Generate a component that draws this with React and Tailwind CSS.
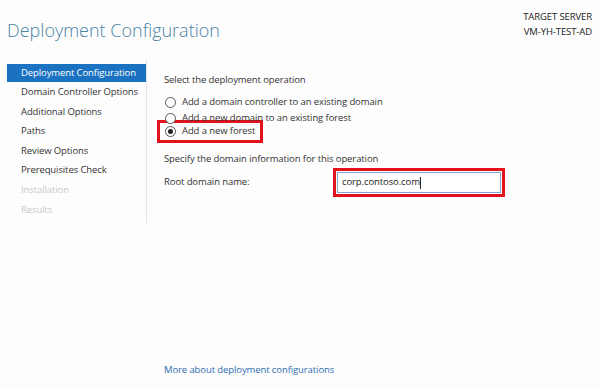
export default function App() {
  const items = [
    { t: "Deployment Configuration", s: "active" },
    { t: "Domain Controller Options" },
    { t: "Additional Options" },
    { t: "Paths" },
    { t: "Review Options" },
    { t: "Prerequisites Check" },
    { t: "Installation", s: "dis" },
    { t: "Results", s: "dis" },
  ];
  const Radio = ({ on }) => (
    <span className="w-[11px] h-[11px] rounded-full border border-[#555] bg-white flex items-center justify-center shrink-0">
      {on && <span className="w-[5px] h-[5px] rounded-full bg-[#222]" />}
    </span>
  );
  return (
    <div
      className="w-[602px] h-[387px] bg-[#fdfdfd] text-[#333] overflow-hidden relative tracking-[-0.1px]"
      style={{ fontFamily: '"Open Sans", "Noto Sans", sans-serif' }}
    >
      <div className="flex justify-between items-start h-[60px]">
        <div className="pl-[7px] pt-[17px] text-[18px] font-light text-[#4a84a6] leading-[26px] tracking-normal">
          Deployment Configuration
        </div>
        <div className="pr-[10px] pt-[9px] text-right text-[9.5px] leading-[15px] text-[#222]">
          <div>TARGET SERVER</div>
          <div>VM-YH-TEST-AD</div>
        </div>
      </div>
      <div className="flex">
        <div className="w-[147px] pl-[7px] pt-[4px] border-r border-[#e4e4e4] h-[163px]">
          {items.map((it) => (
            <div
              key={it.t}
              className={
                "pl-[14px] text-[9.5px] whitespace-nowrap " +
                (it.s === "active"
                  ? "bg-[#1b72c0] text-white h-[18px] leading-[18px]"
                  : it.s === "dis"
                  ? "text-[#c8c8c8] h-[19.6px] leading-[19.6px]"
                  : "text-[#333] h-[19.6px] leading-[19.6px]")
              }
            >
              {it.t}
            </div>
          ))}
        </div>
        <div className="flex-1 pl-[10px] text-[9.5px] text-[#333]">
          <div className="pl-[7px] pt-[13px] leading-[14px]">Select the deployment operation</div>
          <div className="mt-[8px] pl-[8px] flex items-center gap-[6px] h-[15px]">
            <Radio />
            <span>Add a domain controller to an existing domain</span>
          </div>
          <div className="pl-[8px] flex items-center gap-[6px] h-[16px]">
            <Radio />
            <span>Add a new domain to an existing forest</span>
          </div>
          <div className="-mt-[6px] flex items-center gap-[6px] h-[23px] w-[106px] border-[3px] border-[#e3131d] pl-[5px] whitespace-nowrap">
            <Radio on />
            <span>Add a new forest</span>
          </div>
          <div className="pl-[7px] mt-[9px] leading-[14px]">Specify the domain information for this operation</div>
          <div className="flex items-center mt-[2px]">
            <div className="pl-[7px] w-[176px]">Root domain name:</div>
            <div className="border-[3px] border-[#e3131d] p-[1px] w-[172px] h-[29px]">
              <div className="border border-[#7ea6d0] bg-white h-full flex items-center pl-[4px] text-[9.5px] text-[#222]">
                corp.contoso.com<span className="w-px h-[12px] bg-[#222]" />
              </div>
            </div>
          </div>
        </div>
      </div>
      <div className="absolute left-[164px] top-[362px] text-[9.5px] text-[#2f6eb0] leading-[16px]">
        More about deployment configurations
      </div>
    </div>
  );
}
